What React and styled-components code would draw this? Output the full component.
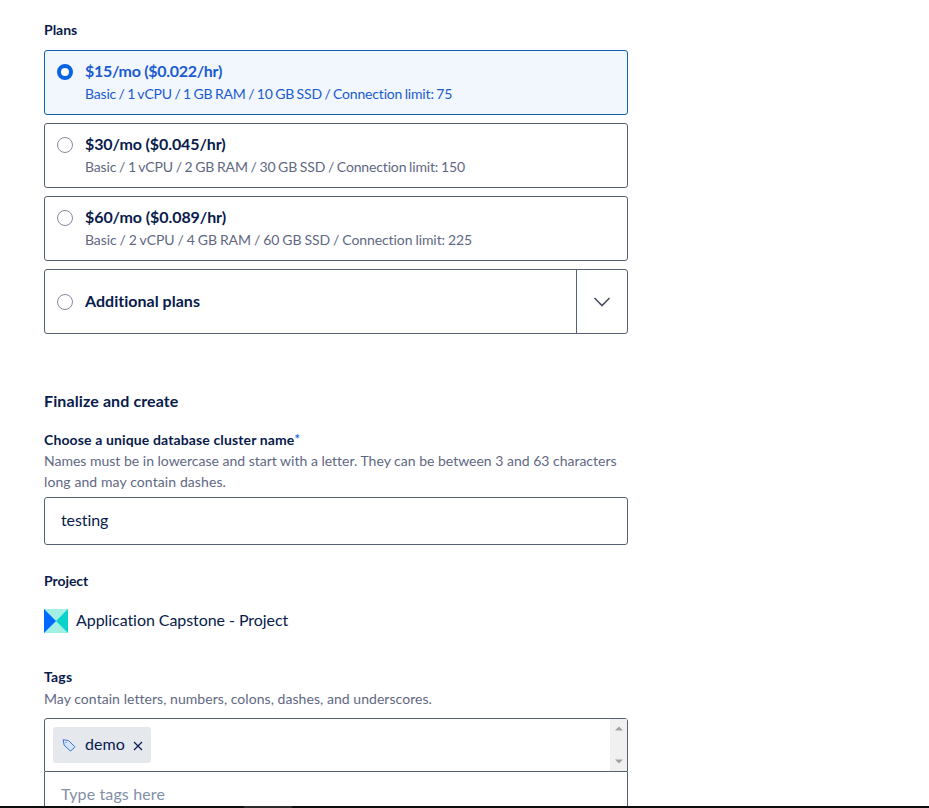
import React from "react";
import styled, { createGlobalStyle, css } from "styled-components";

const c = {
  ink: "#081b4b",
  muted: "#5f6883",
  blue: "#1a5bd0",
  line: "#566274",
};

const Global = createGlobalStyle`
  * { box-sizing: border-box; }
  body {
    margin: 0;
    overflow: hidden;
    background: #fff;
    color: ${c.ink};
    font-family: Lato, "Open Sans", sans-serif;
    font-variant-ligatures: none;
  }
`;

const spacing = css`
  letter-spacing: ${(p) => p.$ls || 0}px;
  word-spacing: ${(p) => p.$ws || 0}px;
  white-space: nowrap;
`;

const Page = styled.div`
  height: 808px;
  display: flex;
  flex-direction: column;
  overflow: hidden;
`;

const Form = styled.main`
  flex: 1;
  min-height: 0;
  width: 628px;
  padding: 19px 0 0 44px;
  overflow: hidden;
`;

const Label = styled.h3`
  margin: 0;
  height: 21px;
  font-size: 14px;
  line-height: 21px;
  font-weight: 700;
  ${spacing}
`;

const Required = styled.sup`
  color: #2f6be0;
  font-size: 13px;
  line-height: 0;
  font-weight: 700;
  vertical-align: 1px;
`;

const Heading = styled.h2`
  margin: 55px 0 16px;
  font-size: 16px;
  line-height: 24px;
  font-weight: 700;
  ${spacing}
`;

const Hint = styled.p`
  margin: ${(p) => (p.$top || 0)}px 0 0;
  color: ${c.muted};
  font-size: 14px;
  line-height: 21px;
  ${spacing}
`;

const PlanList = styled.div`
  display: flex;
  flex-direction: column;
  gap: 8px;
  margin-top: 10px;
`;

const Plan = styled.label`
  display: flex;
  align-items: ${(p) => (p.$centered ? "center" : "flex-start")};
  gap: 12px;
  height: 65px;
  padding: ${(p) => (p.$centered ? "0 0 0 12px" : "8px 12px")};
  border: 1px solid ${(p) => (p.$selected ? "#1260b4" : c.line)};
  border-radius: 3px;
  background: ${(p) => (p.$selected ? "#f2f7fe" : "#fff")};
  color: ${(p) => (p.$selected ? c.blue : c.ink)};
`;

const Radio = styled.span`
  flex: none;
  width: 16px;
  height: 16px;
  margin-top: ${(p) => (p.$top || 0)}px;
  border: ${(p) => (p.$selected ? "4px solid #0a64e4" : "1px solid #858ba0")};
  border-radius: 50%;
  background: #fff;
`;

const PlanTitle = styled.div`
  padding-bottom: ${(p) => (p.$raised ? 2 : 0)}px;
  font-size: 16px;
  line-height: 24px;
  font-weight: 700;
  ${spacing}
`;

const PlanSpec = styled.div`
  color: ${(p) => (p.$selected ? c.blue : c.muted)};
  font-size: 14px;
  line-height: 21px;
  ${spacing}
`;

const Expand = styled.span`
  display: grid;
  place-items: center;
  width: 51px;
  height: 63px;
  margin-left: auto;
  border-left: 1px solid ${c.line};
`;

const NameInput = styled.div`
  height: 48px;
  margin: 5px 0 25px;
  padding: 0 16px;
  border: 1px solid ${c.line};
  border-radius: 3px;
  font-size: 16px;
  line-height: 44px;
  ${spacing}
`;

const Project = styled.div`
  display: flex;
  align-items: center;
  gap: 8px;
  height: 24px;
  margin: 18px 0 33px;
  font-size: 16px;
  ${spacing}
`;

const ProjectName = styled.span`
  padding-bottom: 4px;
`;

const TagBox = styled.div`
  display: flex;
  height: 54px;
  margin-top: 9px;
  border: 1px solid ${c.line};
  border-radius: 3px 3px 0 0;
`;

const TagArea = styled.div`
  flex: 1;
  padding: 8px;
`;

const Tag = styled.span`
  display: flex;
  align-items: center;
  width: 98px;
  height: 36px;
  padding-left: 9px;
  border-radius: 3px;
  background: #e5e8ed;
  font-size: 16px;
  line-height: 24px;
  ${spacing}
`;

const TagName = styled.span`
  width: 41px;
  margin: 0 7px 0 9px;
  padding-bottom: 2px;
`;

const Scroll = styled.div`
  display: flex;
  flex-direction: column;
  align-items: center;
  justify-content: space-between;
  width: 17px;
  padding: 7px 0;
  background: #f0f0f1;
`;

const TagInput = styled.div`
  height: 50px;
  padding: 0 16px;
  border: 1px solid ${c.line};
  border-top: 0;
  color: #8290a8;
  font-size: 16px;
  line-height: 44px;
  ${spacing}
`;

const Taskbar = styled.div`
  flex: none;
  height: 2px;
  padding-left: 244px;
  background: #0c0e0e;
`;

const TaskbarItem = styled.div`
  width: 48px;
  height: 2px;
  background: #2b2d2e;
`;

const plans = [
  { price: "$15/mo ($0.022/hr)", spec: "Basic / 1 vCPU / 1 GB RAM / 10 GB SSD / Connection limit: 75", ls: -0.3, specLs: -0.18, ws: -0.9, selected: true },
  { price: "$30/mo ($0.045/hr)", spec: "Basic / 1 vCPU / 2 GB RAM / 30 GB SSD / Connection limit: 150", ls: -0.107, specLs: -0.15, ws: -0.7 },
  { price: "$60/mo ($0.089/hr)", spec: "Basic / 2 vCPU / 4 GB RAM / 60 GB SSD / Connection limit: 225", ls: -0.079, specLs: -0.08, ws: -0.5 },
];

const ChevronIcon = () => (
  <svg width="18" height="12" viewBox="0 0 18 12" fill="none" stroke="#4a5068" strokeWidth="1.6">
    <path d="M1.5 2 9 9.5 16.5 2" />
  </svg>
);

const ProjectIcon = () => (
  <svg width="24" height="24" viewBox="0 0 24 24">
    <path fill="#a2f0e4" d="M0 0h24v24H0z" />
    <path fill="#0069ff" d="M0 0 12 12 0 24z" />
    <path fill="#08d3cb" d="M24 0 12 12l12 12z" />
  </svg>
);

const TagIcon = () => (
  <svg width="14" height="14" viewBox="0 0 14 14" fill="#d3e4fb" stroke="#3f72cf" strokeLinejoin="round">
    <path d="M1.2 1.7 6.6 2.6 12.6 8.5Q13 9 12.6 9.4L9 12.7Q8.5 13.1 8 12.7L2.1 7.1Z" />
    <circle cx="4" cy="4.5" r=".6" fill="#3f72cf" stroke="none" />
  </svg>
);

const CloseIcon = () => (
  <svg width="10" height="12" viewBox="0 0 10 12" stroke={c.ink} strokeWidth="1.15">
    <path d="m1 3 8 8M9 3 1 11" />
  </svg>
);

const Arrow = ({ down }) => (
  <svg width="8" height="5" viewBox="0 0 8 5" fill="#a0a1a3">
    <path d={down ? "M0 .5h8L4 4.5z" : "M0 4.5h8L4 .5z"} />
  </svg>
);

export default function App() {
  return (
    <Page>
      <Global />
      <Form>
        <Label>Plans</Label>
        <PlanList>
          {plans.map((p) => (
            <Plan key={p.price} $selected={p.selected}>
              <Radio $selected={p.selected} $top={5} />
              <div>
                <PlanTitle $ls={p.ls}>{p.price}</PlanTitle>
                <PlanSpec $selected={p.selected} $ls={p.specLs} $ws={p.ws}>{p.spec}</PlanSpec>
              </div>
            </Plan>
          ))}
          <Plan $centered>
            <Radio />
            <PlanTitle $raised $ls={0.02}>Additional plans</PlanTitle>
            <Expand><ChevronIcon /></Expand>
          </Plan>
        </PlanList>

        <Heading $ls={0.106}>Finalize and create</Heading>
        <Label $ls={0.131}>
          Choose a unique database cluster name<Required>*</Required>
        </Label>
        <Hint>Names must be in lowercase and start with a letter. They can be between 3 and 63 characters</Hint>
        <Hint $ls={0.098}>long and may contain dashes.</Hint>
        <NameInput $ls={-0.1}>testing</NameInput>

        <Label $ls={-0.06}>Project</Label>
        <Project $ls={-0.06}>
          <ProjectIcon />
          <ProjectName>Application Capstone - Project</ProjectName>
        </Project>

        <Label $ls={0.2}>Tags</Label>
        <Hint $top={1} $ls={0.054}>May contain letters, numbers, colons, dashes, and underscores.</Hint>
        <TagBox>
          <TagArea>
            <Tag $ls={0.09}>
              <TagIcon />
              <TagName>demo</TagName>
              <CloseIcon />
            </Tag>
          </TagArea>
          <Scroll>
            <Arrow />
            <Arrow down />
          </Scroll>
        </TagBox>
        <TagInput $ls={0.129}>Type tags here</TagInput>
      </Form>
      <Taskbar><TaskbarItem /></Taskbar>
    </Page>
  );
}
